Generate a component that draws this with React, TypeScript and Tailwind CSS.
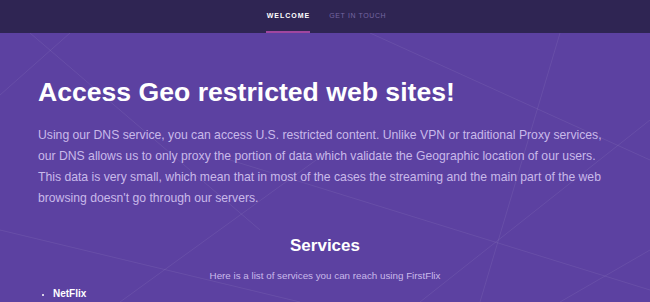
import React from 'react';

const lines: [number, number, number, number][] = [
  [0, 95, 70, 33],
  [30, 33, 260, 230],
  [370, 33, 650, 160],
  [560, 33, 480, 302],
  [650, 120, 420, 302],
  [0, 230, 300, 302],
  [120, 302, 330, 150],
  [650, 250, 560, 302],
  [230, 160, 650, 290],
];

export default function App() {
  return (
    <div className="relative h-[302px] w-[650px] overflow-hidden bg-[#5c41a1] font-['Liberation_Sans',Arial,sans-serif]">
      <svg className="pointer-events-none absolute inset-0" width="650" height="302">
        {lines.map(([x1, y1, x2, y2], i) => (
          <line key={i} x1={x1} y1={y1} x2={x2} y2={y2} stroke="#ffffff" strokeOpacity="0.07" strokeWidth="1" />
        ))}
      </svg>

      <nav className="relative flex h-[33px] items-center justify-center gap-[19px] bg-[#2f2553] pl-[3px]">
        <div className="relative flex h-full items-center">
          <span className="text-[7px] font-bold tracking-[1px] text-white">WELCOME</span>
          <div className="absolute bottom-0 left-[-1px] right-0 h-[2px] bg-[#a0469f]" />
        </div>
        <div className="flex h-full items-center">
          <span className="text-[7px] font-normal tracking-[0.6px] text-[#7565a0]">GET IN TOUCH</span>
        </div>
      </nav>

      <main className="relative mx-[38px] pt-[43px]">
        <h1 className="text-[26.6px] font-bold leading-[33px] text-white">Access Geo restricted web sites!</h1>
        <p className="mt-[16px] text-[12.2px] leading-[21px] text-[#c9b9ea]">
          Using our DNS service, you can access U.S. restricted content. Unlike VPN or traditional Proxy services,
          our DNS allows us to only proxy the portion of data which validate the Geographic location of our users.
          This data is very small, which mean that in most of the cases the streaming and the main part of the web
          browsing doesn't go through our servers.
        </p>

        <h2 className="mt-[26px] text-center text-[17px] font-bold leading-[22px] text-white">Services</h2>
        <p className="mt-[12px] text-center text-[9.8px] leading-[14px] text-[#c9b9ea]">
          Here is a list of services you can reach using FirstFlix
        </p>
        <ul className="mt-[4px] list-disc pl-[15px] text-[10px] font-bold leading-[14px] text-white marker:text-[8px]">
          <li>NetFlix</li>
        </ul>
      </main>
    </div>
  );
}
